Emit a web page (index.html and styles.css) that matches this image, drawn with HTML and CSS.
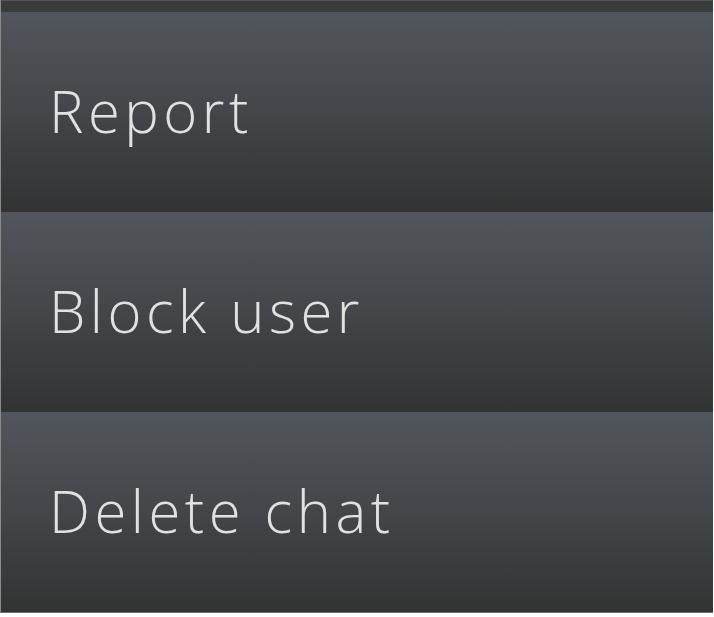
FILE: index.html
```html
<!DOCTYPE html>
<html lang="en">
<head>
  <meta charset="UTF-8" />
  <title>Chat options</title>
  <link rel="stylesheet" href="styles.css">
</head>
<body>
  <div class="sheet">
    <div class="sheet-top"></div>
    <ul class="menu">
      <li class="menu-item">Report</li>
      <li class="menu-item">Block user</li>
      <li class="menu-item">Delete chat</li>
    </ul>
  </div>
</body>
</html>
```
FILE: styles.css
```css
/* General reset */
* {
  margin: 0;
  padding: 0;
  box-sizing: border-box;
}

body {
  background: #ffffff;
  width: 714px;
  height: 617px;
  overflow: hidden;
}

.sheet {
  width: 713px;
  height: 613px;
  border-left: 1px solid #8a8c8c;
  border-bottom: 1px solid #6e7070;
  background: #333434;
}

.sheet-top {
  height: 12px;
  background: #3a3b3b;
  border-top: 1px solid #555757;
}

.menu {
  list-style: none;
}

.menu-item {
  display: flex;
  align-items: center;
  height: 200px;
  padding-left: 48px;
  padding-bottom: 4px;
  background: linear-gradient(to bottom, #51565c 0%, #44484c 45%, #323333 100%);
  color: #e0e1e1;
  font-family: 'Open Sans', sans-serif;
  font-size: 58px;
  font-weight: 300;
  letter-spacing: 4.5px;
}
```
